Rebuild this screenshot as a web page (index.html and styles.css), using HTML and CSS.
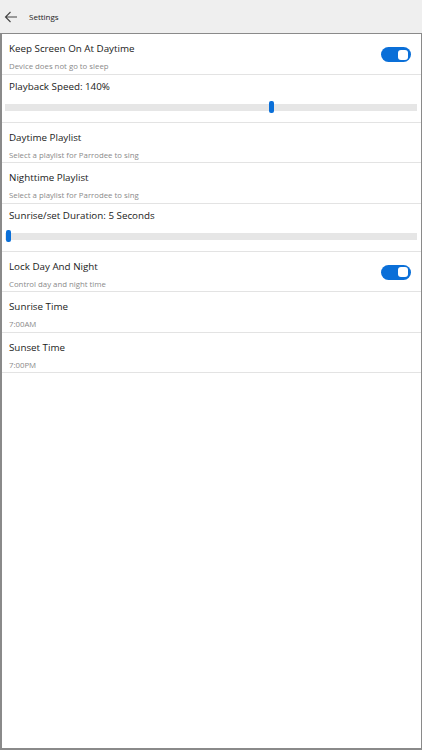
FILE: index.html
```html
<!DOCTYPE html>
<html lang="en">
<head>
    <meta charset="UTF-8">
    <meta name="viewport" content="width=device-width, initial-scale=1.0">
    <title>Settings</title>
    <link rel="stylesheet" href="styles.css">
</head>
<body>
    <!-- Pasek tytułu -->
    <header class="title-bar">
        <svg class="back-icon" width="14" height="12" viewBox="0 0 14 12">
            <path d="M13 6H1.5M6.5 1L1.5 6l5 5" fill="none" stroke="#444" stroke-width="1.1"/>
        </svg>
        <span class="title">Settings</span>
    </header>

    <main class="panel">
        <div class="row row-toggle">
            <div class="row-text">
                <div class="row-title">Keep Screen On At Daytime</div>
                <div class="row-sub">Device does not go to sleep</div>
            </div>
            <div class="toggle"><span class="knob"></span></div>
        </div>

        <div class="row row-slider">
            <div class="row-title">Playback Speed: 140%</div>
            <div class="slider">
                <span class="thumb" style="left: 264px"></span>
            </div>
        </div>

        <div class="row">
            <div class="row-title">Daytime Playlist</div>
            <div class="row-sub">Select a playlist for Parrodee to sing</div>
        </div>

        <div class="row">
            <div class="row-title">Nighttime Playlist</div>
            <div class="row-sub">Select a playlist for Parrodee to sing</div>
        </div>

        <div class="row row-slider">
            <div class="row-title">Sunrise/set Duration: 5 Seconds</div>
            <div class="slider">
                <span class="thumb" style="left: 1px"></span>
            </div>
        </div>

        <div class="row row-toggle">
            <div class="row-text">
                <div class="row-title">Lock Day And Night</div>
                <div class="row-sub">Control day and night time</div>
            </div>
            <div class="toggle"><span class="knob"></span></div>
        </div>

        <div class="row">
            <div class="row-title">Sunrise Time</div>
            <div class="row-sub">7:00AM</div>
        </div>

        <div class="row">
            <div class="row-title">Sunset Time</div>
            <div class="row-sub">7:00PM</div>
        </div>
    </main>
</body>
</html>
```

FILE: styles.css
```css
:root {
    --accent: #0a6fd8;
    --divider: #e3e3e3;
    --text: #1a1a1a;
    --muted: #8a8a8a;
}

* {
    margin: 0;
    padding: 0;
    box-sizing: border-box;
}

html, body {
    height: 100%;
}

body {
    font-family: 'Open Sans', 'Noto Sans', sans-serif;
    color: var(--text);
    background: #efefef;
    display: flex;
    flex-direction: column;
}

/* Pasek tytułu */
.title-bar {
    height: 33px;
    display: flex;
    align-items: center;
    padding-left: 4px;
    flex-shrink: 0;
}

.back-icon {
    margin-right: 11px;
}

.title {
    font-size: 8px;
    color: #222;
}

/* Panel z ustawieniami */
.panel {
    flex: 1;
    background: #fff;
    border: 1px solid #8a8a8a;
    border-left-width: 2px;
    border-bottom-width: 2px;
}

.row {
    border-bottom: 1px solid var(--divider);
    padding: 7px 0 0 7px;
    height: 40.5px;
}

.row-title {
    font-size: 9.8px;
    line-height: 15px;
}

.row-sub {
    font-size: 7.8px;
    line-height: 11px;
    color: var(--muted);
    margin-top: 5px;
}

.row-toggle {
    display: flex;
    justify-content: space-between;
    padding-right: 10px;
}

.toggle {
    width: 30px;
    height: 15px;
    border-radius: 8px;
    background: var(--accent);
    margin-top: 6px;
    display: flex;
    align-items: center;
    justify-content: flex-end;
    padding-right: 3px;
}

.knob {
    width: 10px;
    height: 10px;
    border-radius: 3px;
    background: #fff;
}

.row-slider {
    height: 48px;
    padding-left: 0;
}

.row-slider .row-title {
    padding-left: 7px;
    margin-top: -3px;
}

.slider {
    position: relative;
    margin: 10px 4px 0 3px;
    height: 7px;
    background: #e6e6e6;
}

.thumb {
    position: absolute;
    top: -3px;
    width: 5px;
    height: 12px;
    border-radius: 2px;
    background: var(--accent);
}
```
